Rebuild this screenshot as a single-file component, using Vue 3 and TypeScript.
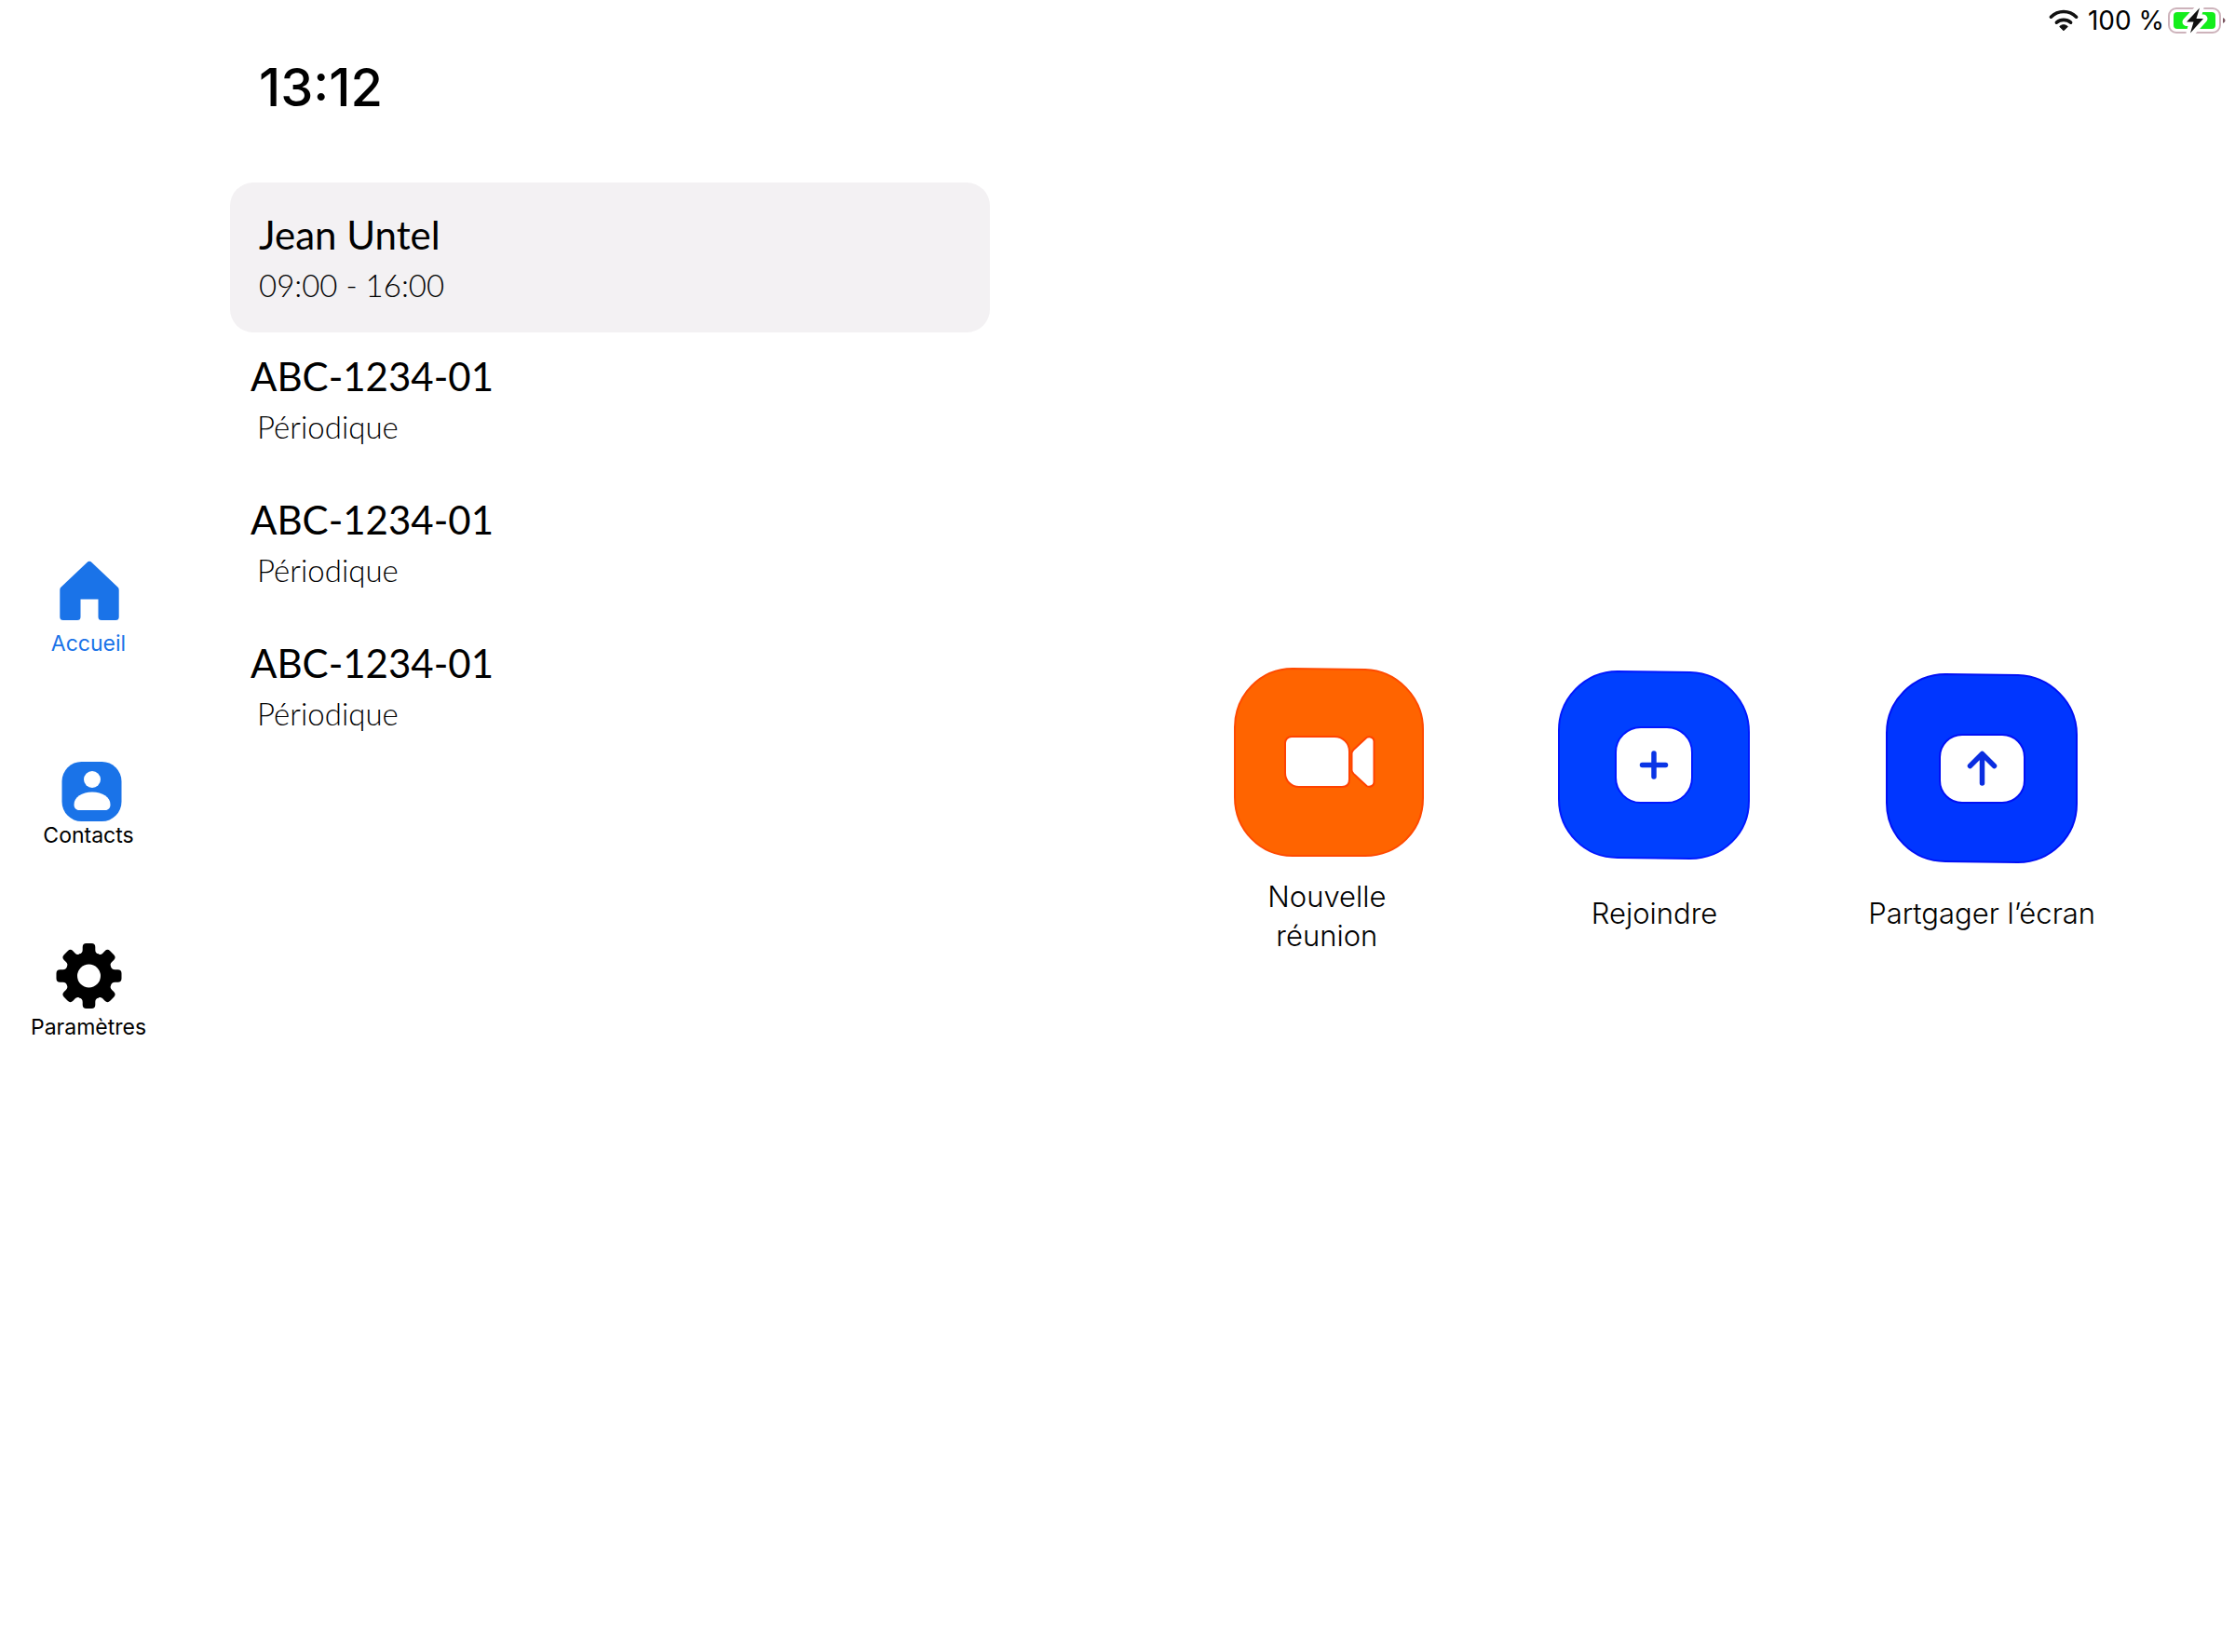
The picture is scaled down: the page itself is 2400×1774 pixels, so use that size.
<script setup lang="ts">
interface Meeting {
  title: string
  detail: string
  current?: boolean
}

const meetings: Meeting[] = [
  { title: 'Jean Untel', detail: '09:00 - 16:00', current: true },
  { title: 'ABC-1234-01', detail: 'Périodique' },
  { title: 'ABC-1234-01', detail: 'Périodique' },
  { title: 'ABC-1234-01', detail: 'Périodique' },
]

const teeth = [0, 45, 90, 135, 180, 225, 270, 315]
</script>

<template>
  <div class="app">
    <header class="status">
      <svg class="wifi" viewBox="0 0 32 24" aria-hidden="true">
        <g fill="none" stroke="#111" stroke-width="3.6" stroke-linecap="round">
          <path d="M2.4 8.2C10 .6 22 .6 29.6 8.2" />
          <path d="M8.400 14.200c4.400-3.800 10.800-3.800 15.200 0" />
        </g>
        <path d="M16 16.800c1.800 0 3.200.6 4.300 1.700L16 22.800l-4.300-4.300c1.100-1.100 2.500-1.700 4.300-1.700z" fill="#111" stroke="#111" stroke-linejoin="round" />
      </svg>
      <span class="percent">100 %</span>
      <svg class="battery" viewBox="0 0 62 28" aria-hidden="true">
        <rect x="1" y="1" width="55" height="26" rx="8" fill="#fff" stroke="#cdb3bb" stroke-width="2" />
        <rect x="6" y="5" width="45" height="18" rx="4" fill="#14ee1c" />
        <path d="M59 11c1.500.8 2.500 1.800 2.500 3s-1 2.200-2.500 3z" fill="#7b5560" />
        <path d="M34 0.500 20 15.500h7.500L24 27.500 38 12H30.500z" fill="#111" stroke="#fff" stroke-width="9" paint-order="stroke" stroke-linejoin="round" />
      </svg>
    </header>

    <div class="body">
      <nav class="nav" aria-label="Navigation">
        <button class="nav-item active" type="button">
          <svg class="nav-icon" viewBox="0 0 70 78" aria-hidden="true">
            <path d="M33.200 5.200a4 4 0 0 1 5.600 0L66.500 31.500a4 4 0 0 1 1.200 3V63.500a3.500 3.500 0 0 1-3.500 3.500H49a3.500 3.500 0 0 1-3.500-3.500V44.500h-19V63.500a3.500 3.500 0 0 1-3.500 3.500H7.800a3.500 3.500 0 0 1-3.500-3.500V34.500a4 4 0 0 1 1.200-3z" fill="#1a73e8" />
          </svg>
          <span>Accueil</span>
        </button>
        <button class="nav-item" type="button">
          <svg class="nav-icon" viewBox="0 0 70 78" aria-hidden="true">
            <rect x="6.500" y="13" width="64" height="64" rx="21" fill="#1a73e8" />
            <circle cx="39" cy="32" r="9" fill="#fff" />
            <path d="M19.500 59c0-8 8.500-13.500 19.500-13.500S58.500 51 58.500 59c0 3.500-2 6-5.500 6H25c-3.500 0-5.500-2.500-5.500-6z" fill="#fff" />
          </svg>
          <span>Contacts</span>
        </button>
        <button class="nav-item" type="button">
          <svg class="nav-icon" viewBox="0 0 70 78" aria-hidden="true">
            <g transform="translate(35.500 37)">
              <circle r="19" fill="none" stroke="#000" stroke-width="13" />
              <path v-for="a in teeth" :key="a" :transform="`rotate(${a})`" d="M-10.500-23c2.500-1 3.700-2.500 3.700-5V-31a4 4 0 0 1 4-4h5.600a4 4 0 0 1 4 4V-28c0 2.500 1.200 4 3.700 5z" fill="#000" />
            </g>
          </svg>
          <span>Paramètres</span>
        </button>
      </nav>

      <main class="main">
        <section class="agenda">
          <time class="clock" datetime="13:12">13:12</time>
          <ul class="meetings">
            <li v-for="(m, i) in meetings" :key="i" class="meeting" :class="{ current: m.current }">
              <h2 class="title">{{ m.title }}</h2>
              <p class="detail">{{ m.detail }}</p>
            </li>
          </ul>
        </section>

        <section class="actions">
          <button class="action" type="button">
            <svg class="tile" viewBox="-2 -1 206 212" aria-hidden="true">
              <path d="M64 1 142 2C176 3 204 32 204 66V140C204 175 177 202 142 202H64C29 202 2 174 2 139V64C2 30 29 1 64 1z" fill="#ff6400" stroke="#ff4a00" stroke-width="2" />
              <path d="M63 74h46c9 0 16 7 16 16v30c0 5-3 8-8 8H71c-9 0-15-7-15-15V81c0-4 3-7 7-7z" fill="#fff" stroke="#ff4200" stroke-width="2" />
              <path d="M127.500 92c0-2 1-3 2-4l14-13c3-2 8 0 8 4v44c0 4-5 6-8 4l-14-13c-1-1-2-2-2-4z" fill="#fff" stroke="#ff4200" stroke-width="2" />
            </svg>
            <span class="label">Nouvelle<br />réunion</span>
          </button>
          <button class="action" type="button">
            <svg class="tile" viewBox="0 0 206 212" aria-hidden="true">
              <path d="M64 5 142 6C177 7 205 36 205 70V144C205 179 177 206 142 206L64 205C29 205 1 177 1 142V68C1 34 29 5 64 5z" fill="#0040ff" stroke="#0018ff" stroke-width="2" />
              <rect x="62" y="65" width="82" height="81" rx="27" fill="#fff" stroke="#0018ff" stroke-width="2" />
              <path d="M103 93v25M90.500 105.500h25" fill="none" stroke="#0a35e6" stroke-width="5.500" stroke-linecap="round" />
            </svg>
            <span class="label single">Rejoindre</span>
          </button>
          <button class="action" type="button">
            <svg class="tile" viewBox="0 0 206 212" aria-hidden="true">
              <path d="M64 8 142 9C177 10 205 39 205 73V147C205 182 177 210 142 210L64 209C29 209 1 181 1 146V71C1 37 29 8 64 8z" fill="#0036ff" stroke="#0010f5" stroke-width="2" />
              <rect x="58" y="73" width="91" height="73" rx="24" fill="#fff" stroke="#0010f5" stroke-width="2" />
              <path d="M103.500 125V94M90.500 106.500l13-13 13 13" fill="none" stroke="#0a2de0" stroke-width="5.500" stroke-linecap="round" stroke-linejoin="round" />
            </svg>
            <span class="label single">Partgager l’écran</span>
          </button>
        </section>
      </main>
    </div>
  </div>
</template>

<style>
body {
  margin: 0;
  background: #fff;
}
</style>

<style scoped>
.app {
  min-height: 100vh;
  color: #000;
  font-family: Inter, "Liberation Sans", sans-serif;
}

button {
  padding: 0;
  border: 0;
  background: none;
  color: inherit;
  font: inherit;
  cursor: pointer;
}

svg {
  display: block;
  overflow: visible;
}

.status {
  display: flex;
  justify-content: flex-end;
  align-items: center;
  box-sizing: border-box;
  height: 46px;
  padding: 0 10px 2px 0;
}

.wifi {
  width: 32px;
  height: 24px;
}

.percent {
  margin: 0 4px 0 10px;
  font-size: 28px;
  line-height: 32px;
}

.battery {
  width: 62px;
  height: 28px;
}

.body {
  display: flex;
}

.nav {
  display: flex;
  flex: none;
  flex-direction: column;
  align-items: center;
  gap: 100px;
  width: 190px;
  padding-top: 553px;
}

.nav-item {
  display: flex;
  flex-direction: column;
  align-items: center;
  font-size: 23px;
  line-height: 28px;
}

.nav-item.active {
  color: #1a73e8;
}

.nav-icon {
  width: 70px;
  height: 78px;
}

.main {
  display: flex;
  flex: 1;
  align-items: flex-start;
}

.agenda {
  flex: none;
  width: 34vw;
  margin-left: 57px;
}

.clock {
  display: block;
  padding: 12px 0 0 31px;
  font-size: 56px;
  font-weight: 500;
  line-height: 72px;
}

.meetings {
  margin: 66px 0 0;
  padding: 0;
  list-style: none;
  font-family: Lato, "Liberation Sans", sans-serif;
}

.meeting {
  padding: 21px 22px 29px;
}

.meeting.current {
  padding: 30px 31px 27px;
  border-radius: 25px;
  background: #f3f1f3;
}

.title {
  margin: 0 0 4px;
  font-size: 42px;
  font-weight: 400;
  line-height: 52px;
}

.detail {
  margin: 0;
  padding-left: 7px;
  font-size: 33px;
  font-weight: 300;
  line-height: 48px;
}

.current .detail {
  padding-left: 0;
}

.actions {
  display: grid;
  flex: 1;
  grid-template-columns: repeat(3, 1fr);
  padding: 670px 96px 0 186px;
}

.action {
  display: flex;
  flex-direction: column;
  align-items: center;
}

.tile {
  width: 206px;
  height: 212px;
}

.label {
  margin-top: 14px;
  font-size: 31px;
  font-weight: 300;
  line-height: 42px;
}

.label.single {
  margin-top: 32px;
}
</style>
